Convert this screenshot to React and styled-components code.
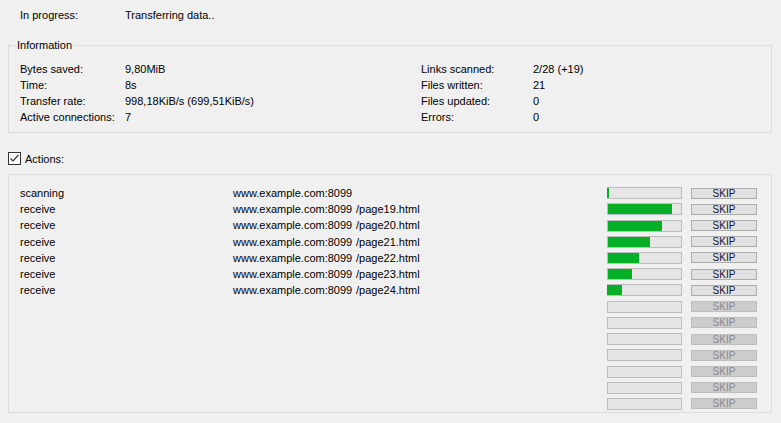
import React from 'react'
import styled, { createGlobalStyle } from 'styled-components'

const GlobalStyle = createGlobalStyle`
  html, body {
    margin: 0;
    padding: 0;
    background: #f0f0f0;
  }
  body {
    font-family: "Liberation Sans", Arial, sans-serif;
    font-size: 11px;
    color: #000;
  }
`

const Window = styled.div`
  width: 781px;
  height: 423px;
  background: #f0f0f0;
  overflow: hidden;
  display: flex;
  flex-direction: column;
`

const StatusRow = styled.div`
  display: grid;
  grid-template-columns: 105px 1fr;
  height: 30px;
  line-height: 30px;
  padding-left: 20px;
  margin-bottom: 9px;
`

const Group = styled.fieldset`
  margin: 0 9px 0 8px;
  padding: 9px 0 7px 0;
  border: 1px solid #dcdcdc;
  min-width: 0;
`

const Legend = styled.legend`
  margin-left: 7px;
  padding: 0 1px;
  line-height: 13px;
`

const InfoGrid = styled.div`
  display: grid;
  grid-template-columns: 105px 296px 112px 1fr;
  grid-auto-rows: 16px;
  line-height: 16px;
  padding-left: 11px;
`

const CheckRow = styled.label`
  display: flex;
  align-items: center;
  gap: 4px;
  margin: 19px 0 0 8px;
  height: 13px;
`

const Panel = styled.div`
  margin: 9px 9px 0 8px;
  border: 1px solid #dcdcdc;
  padding: 10px 0 0 11px;
`

const ActionRow = styled.div`
  display: grid;
  grid-template-columns: 213px 123px 251px 84px 66px;
  align-items: center;
  height: 16.23px;
  line-height: 16.23px;
  white-space: nowrap;
`

const Bar = styled.div`
  position: relative;
  width: 73px;
  height: 10px;
  border: 1px solid #bcbcbc;
  background: #e6e6e6;
`

const Fill = styled.div`
  position: absolute;
  top: 0;
  bottom: 0;
  left: ${p => (p.$over ? '-1px' : '0')};
  background: #06b025;
`

const Skip = styled.button`
  width: 66px;
  height: 11px;
  padding: 0;
  margin: 0;
  box-sizing: border-box;
  border: 1px solid ${p => (p.disabled ? '#bfbfbf' : '#adadad')};
  background: ${p => (p.disabled ? '#cccccc' : '#e1e1e1')};
  color: ${p => (p.disabled ? '#8a8a8a' : '#12123a')};
  font-family: "Liberation Sans", Arial, sans-serif;
  font-size: 10px;
  line-height: 9px;
  text-align: center;
`

const CheckIcon = () => (
  <svg width="13" height="13" viewBox="0 0 13 13">
    <rect x="0.5" y="0.5" width="12" height="12" fill="#fff" stroke="#333" />
    <polyline points="2.5,6.5 5,9 10.5,3" fill="none" stroke="#333" strokeWidth="1.2" />
  </svg>
)

const info = [
  ['Bytes saved:', '9,80MiB', 'Links scanned:', '2/28 (+19)'],
  ['Time:', '8s', 'Files written:', '21'],
  ['Transfer rate:', '998,18KiB/s (699,51KiB/s)', 'Files updated:', '0'],
  ['Active connections:', '7', 'Errors:', '0'],
]

const actions = [
  { state: 'scanning', path: '', fill: 2, over: true },
  { state: 'receive', path: '/page19.html', fill: 64 },
  { state: 'receive', path: '/page20.html', fill: 54 },
  { state: 'receive', path: '/page21.html', fill: 42 },
  { state: 'receive', path: '/page22.html', fill: 31 },
  { state: 'receive', path: '/page23.html', fill: 24 },
  { state: 'receive', path: '/page24.html', fill: 15, over: true },
]

const slots = Array.from({ length: 14 }, (_, i) => actions[i] || null)

export default function App() {
  return (
    <Window>
      <GlobalStyle />
      <StatusRow>
        <span>In progress:</span>
        <span>Transferring data..</span>
      </StatusRow>

      <Group>
        <Legend>Information</Legend>
        <InfoGrid>
          {info.map(row => row.map((cell, j) => <span key={row[0] + j}>{cell}</span>))}
        </InfoGrid>
      </Group>

      <CheckRow>
        <CheckIcon />
        <span>Actions:</span>
      </CheckRow>

      <Panel>
        {slots.map((a, i) => (
          <ActionRow key={i}>
            <span>{a ? a.state : ''}</span>
            <span>{a ? 'www.example.com:8099' : ''}</span>
            <span>{a ? a.path : ''}</span>
            <Bar>{a && <Fill $over={a.over} style={{ width: a.fill }} />}</Bar>
            <Skip disabled={!a}>SKIP</Skip>
          </ActionRow>
        ))}
      </Panel>
    </Window>
  )
}
